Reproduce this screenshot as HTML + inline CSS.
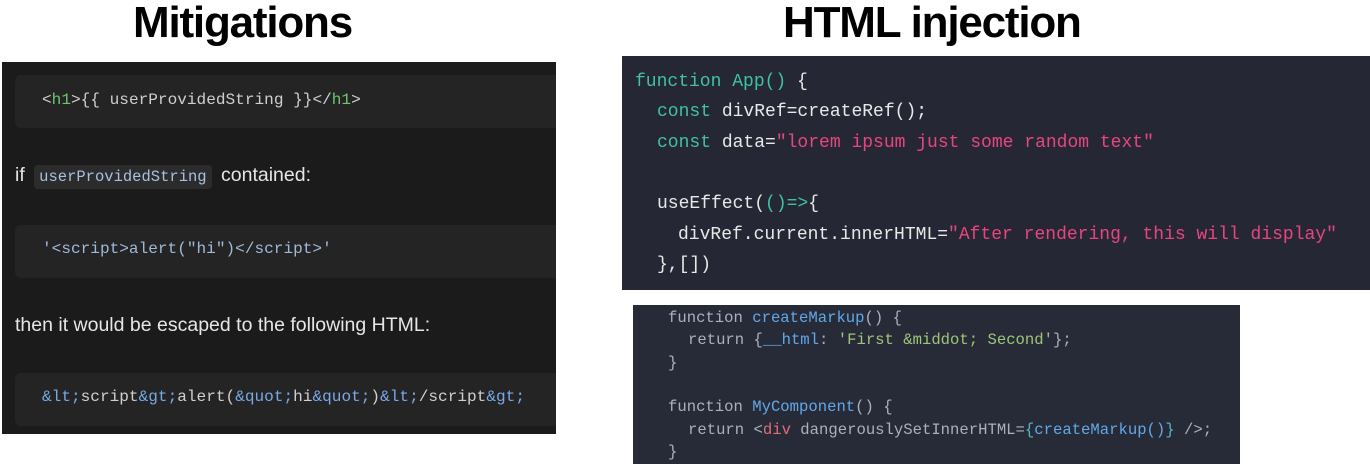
<!DOCTYPE html>
<html><head><meta charset="utf-8"><style>
*{margin:0;padding:0;box-sizing:border-box}
body{width:1370px;height:464px;background:#fff;position:relative;overflow:hidden;font-family:"Liberation Sans",sans-serif}
.t{position:absolute;top:-2px;font-weight:bold;font-size:44px;color:#000;line-height:50px;white-space:nowrap;letter-spacing:-1.2px}
.left{position:absolute;left:2px;top:62px;width:554px;height:372px;background:#1b1b1b}
.blk{position:absolute;left:13px;width:541px;height:53px;background:#242424;border-radius:6px 0 0 6px}
.mono{font-family:"Liberation Mono",monospace;white-space:pre}
.lc{position:absolute;left:40px;font-size:16.1px;color:#cfcfcf}
.p{position:absolute;left:13px;font-size:19.5px;color:#e6e6e6;white-space:nowrap}
.g{color:#6fc36f}.b{color:#78a9e6}.s{color:#9fb9d8}
.rt{position:absolute;left:622px;top:56px;width:748px;height:234px;background:#252834}
.rt div{position:absolute;font-size:18px;color:#e8e8e8;line-height:22px}
.k{color:#3fc0a8}.r{color:#e8457f}
.rb{position:absolute;left:633px;top:305px;width:607px;height:159px;background:#272b38}
.rb div{position:absolute;font-size:15.6px;color:#a9b0bf;line-height:20px}
.f{color:#b3b9c9}.bl{color:#62a8e8}.gr{color:#9ec47a}.rd{color:#e06c75}.cy{color:#56b6c2}
</style></head><body>
<div class="t" style="left:133px">Mitigations</div>
<div class="t" style="left:783px">HTML injection</div>
<div class="left">
 <div class="blk" style="top:13px"></div>
 <div class="lc mono" style="top:29px">&lt;<span class="g">h1</span>&gt;{{ userProvidedString }}&lt;/<span class="g">h1</span>&gt;</div>
 <div class="p" style="top:102px">if <span class="mono" style="font-size:15.5px;color:#a7c1df;background:#2c2c2c;padding:3px 5px;border-radius:4px;margin:0 4px">userProvidedString</span> contained:</div>
 <div class="blk" style="top:163px"></div>
 <div class="lc mono s" style="top:178px">'&lt;script&gt;alert("hi")&lt;/script&gt;'</div>
 <div class="p" style="top:252px">then it would be escaped to the following HTML:</div>
 <div class="blk" style="top:311px"></div>
 <div class="lc mono" style="top:326px"><span class="b">&amp;lt;</span>script<span class="b">&amp;gt;</span>alert(<span class="b">&amp;quot;</span>hi<span class="b">&amp;quot;</span>)<span class="b">&amp;lt;</span>/script<span class="b">&amp;gt;</span></div>
</div>
<div class="rt">
 <div class="mono" style="left:13px;top:15px"><span class="k">function App()</span> {</div>
 <div class="mono" style="left:35px;top:45px"><span class="k">const</span> divRef=createRef();</div>
 <div class="mono" style="left:35px;top:76px"><span class="k">const</span> data=<span class="r">"lorem ipsum just some random text"</span></div>
 <div class="mono" style="left:35px;top:137px">useEffect(<span class="k">()=&gt;</span>{</div>
 <div class="mono" style="left:56px;top:168px">divRef.current.innerHTML=<span class="r">"After rendering, this will display"</span></div>
 <div class="mono" style="left:35px;top:198px">},[])</div>
</div>
<div class="rb">
 <div class="mono" style="left:35px;top:3px">function <span class="bl">createMarkup</span>() {</div>
 <div class="mono" style="left:55px;top:25px">return {<span class="bl">__html</span>: <span class="gr">'First &amp;middot; Second'</span>};</div>
 <div class="mono" style="left:35px;top:48px">}</div>
 <div class="mono" style="left:35px;top:92px">function <span class="bl">MyComponent</span>() {</div>
 <div class="mono" style="left:55px;top:115px">return &lt;<span class="rd">div</span> dangerouslySetInnerHTML=<span class="cy">{</span><span class="bl">createMarkup()</span><span class="cy">}</span> /&gt;;</div>
 <div class="mono" style="left:35px;top:137px">}</div>
</div>
</body></html>
